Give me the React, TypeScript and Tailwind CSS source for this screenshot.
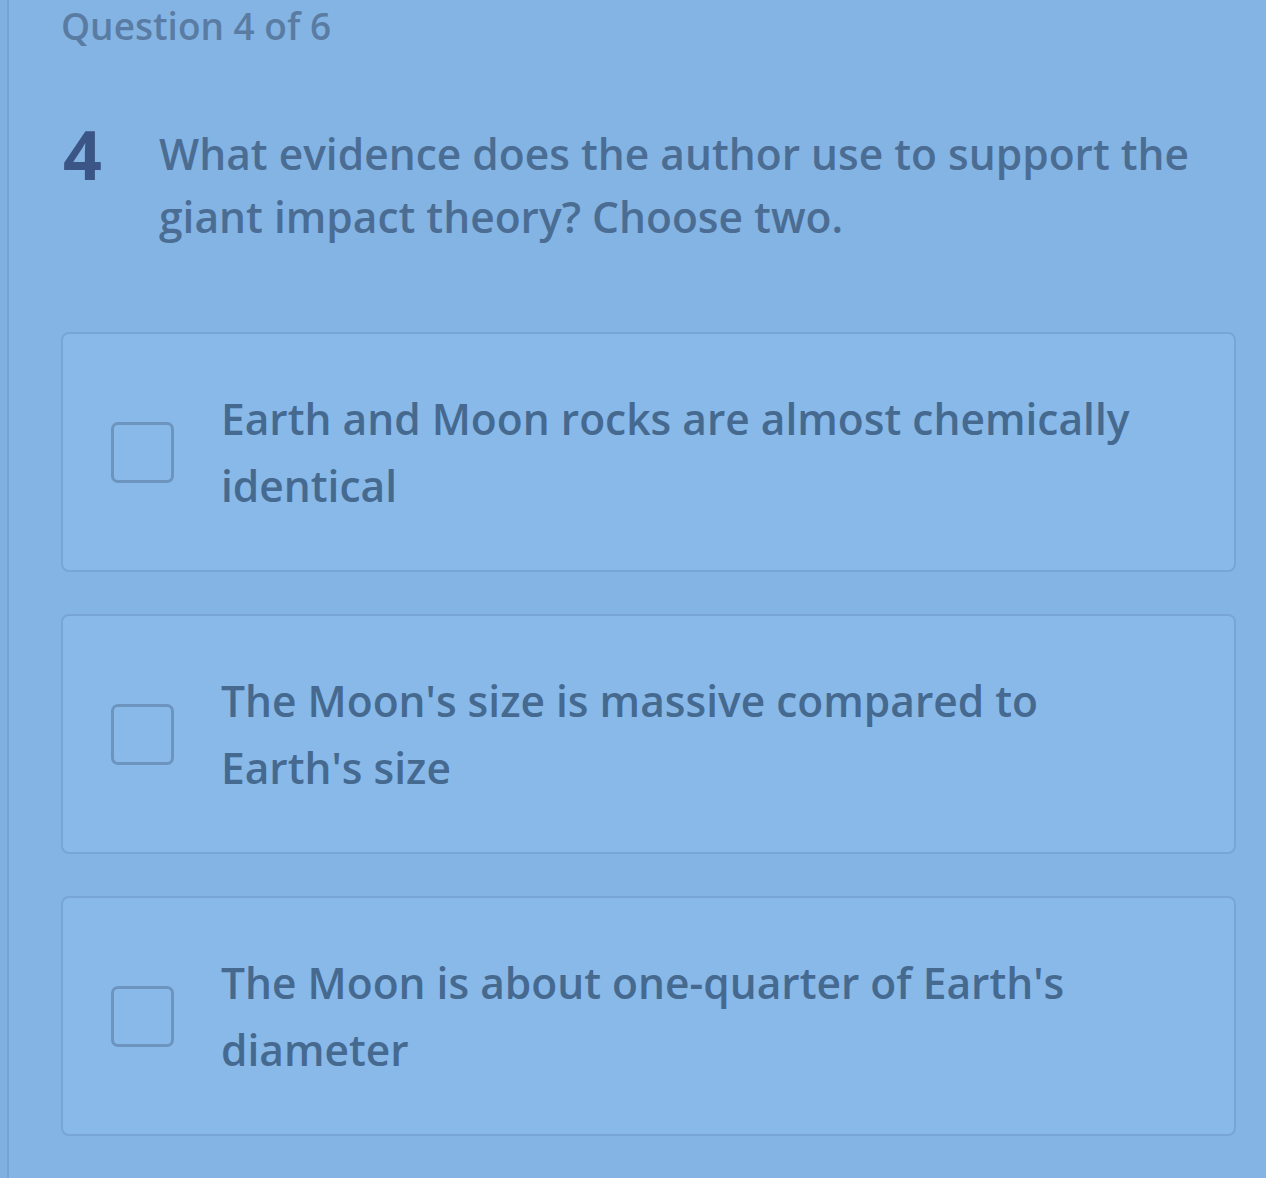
import React from "react";

const options = [
  ["Earth and Moon rocks are almost chemically", "identical"],
  ["The Moon's size is massive compared to", "Earth's size"],
  ["The Moon is about one-quarter of Earth's", "diameter"],
];

function Option({ lines }: { lines: string[] }) {
  return (
    <div className="flex h-[240px] items-center rounded-[8px] border-2 border-[#78a5d3] bg-[#88b9e9] pl-[48px] pr-6">
      <div className="h-[61px] w-[63px] shrink-0 rounded-[7px] border-[3px] border-[#6d94bf]" />
      <div className="ml-[47px] text-[42.5px] font-semibold leading-[67px] text-[#46698f]">
        {lines.map((l) => (
          <div key={l}>{l}</div>
        ))}
      </div>
    </div>
  );
}

export default function App() {
  return (
    <div
      className="flex min-h-[1178px] w-[1266px] bg-[#84b4e4]"
      style={{ fontFamily: '"Open Sans", "Noto Sans", sans-serif' }}
    >
      <div className="w-[9px] shrink-0 border-r-2 border-[#76a4d2] bg-[#7fb0e0]" />
      <div className="flex flex-1 flex-col pl-[52px] pr-[30px]">
        <div className="text-[37px] font-semibold leading-[51px] text-[#5a7ca3]">
          Question 4 of 6
        </div>
        <div className="mt-[71px] flex">
          <div className="w-[98px] shrink-0 pl-[2px] text-[68px] font-bold leading-[64px] text-[#3b5686]">4</div>
          <div className="text-[42.5px] font-semibold leading-[63px] text-[#4b6d93]">
            What evidence does the author use to support the
            <br />
            giant impact theory? Choose two.
          </div>
        </div>
        <div className="mt-[84px] flex flex-col gap-[42px]">
          {options.map((o, i) => (
            <Option key={i} lines={o} />
          ))}
        </div>
      </div>
    </div>
  );
}
